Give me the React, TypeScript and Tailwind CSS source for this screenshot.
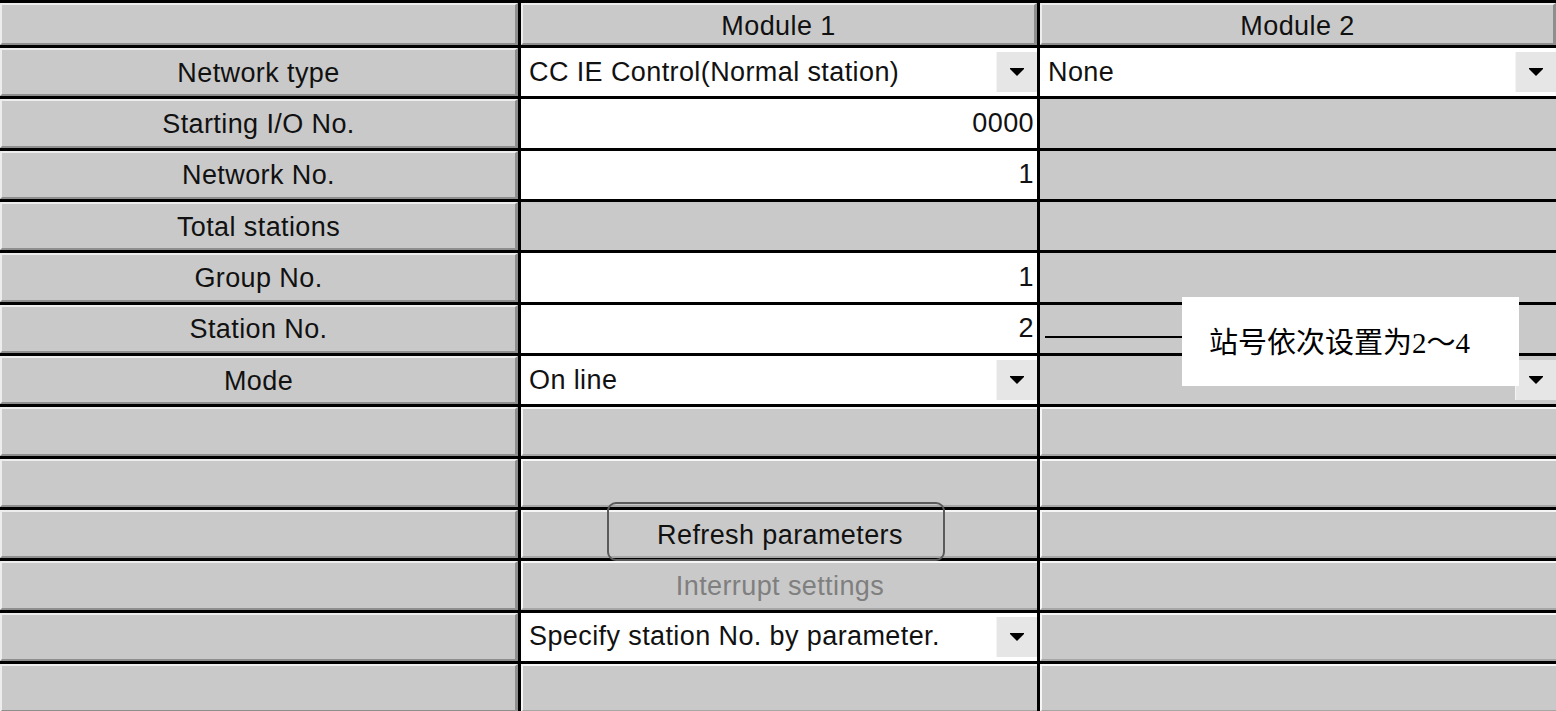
import type { ReactNode } from "react";

// Tabla de parámetros de red (estilo Windows clásico)

const bevel =
  "bg-[#c9c9c9] border-t-2 border-l-2 border-t-[#ededed] border-l-[#ededed] border-b-2 border-r-[3px] border-b-[#8e8e8e] border-r-[#8e8e8e]";

function Arrow() {
  return (
    <div className="w-[41px] my-[4px] bg-[#e6e6e6] border-l border-l-[#f4f4f4] flex items-center justify-center shrink-0">
      <svg width="14" height="8" viewBox="0 0 14 8">
        <polygon points="0,0 14,0 14,1 7,8 0,1" fill="#000" />
      </svg>
    </div>
  );
}

function Label({ text = "" }: { text?: string }) {
  return <div className={`${bevel} flex items-center justify-center pt-[2px]`}>{text}</div>;
}

function Head({ text = "" }: { text?: string }) {
  return <div className={`${bevel} flex items-center justify-center pt-[4px]`}>{text}</div>;
}

function Input({ value }: { value: string }) {
  return <div className="bg-white flex items-center justify-end pr-[3px]">{value}</div>;
}

function Select({ value }: { value: string }) {
  return (
    <div className="bg-white flex items-stretch">
      <div className="flex-1 flex items-center pl-[8px] whitespace-nowrap">{value}</div>
      <Arrow />
    </div>
  );
}

function Flat({ arrow = false }: { arrow?: boolean }) {
  return (
    <div className="bg-[#c9c9c9] flex items-stretch justify-end">
      {arrow && <Arrow />}
    </div>
  );
}

function Btn({ children, muted = false }: { children?: ReactNode; muted?: boolean }) {
  return (
    <div
      className={`bg-[#c9c9c9] border-t-2 border-l-2 border-t-[#f6f6f6] border-l-[#f6f6f6] border-b-2 border-b-[#a6a6a6] flex items-center justify-center pt-[2px] ${
        muted ? "text-[#7f7f7f]" : ""
      }`}
    >
      {children}
    </div>
  );
}

export default function App() {
  return (
    <div className="relative w-[1556px] h-[711px] overflow-hidden bg-black text-[27px] leading-none tracking-[0.4px] text-[#111] font-['Liberation_Sans',Arial,sans-serif]">
      <div className="grid grid-cols-[518px_516px_516px] grid-rows-[42px_repeat(13,48.33px)] gap-[3px] pt-[3px]">
        {/* Cabecera */}
        <Head />
        <Head text="Module 1" />
        <Head text="Module 2" />

        <Label text="Network type" />
        <Select value="CC IE Control(Normal station)" />
        <Select value="None" />

        <Label text="Starting I/O No." />
        <Input value="0000" />
        <Flat />

        <Label text="Network No." />
        <Input value="1" />
        <Flat />

        <Label text="Total stations" />
        <Flat />
        <Flat />

        <Label text="Group No." />
        <Input value="1" />
        <Flat />

        <Label text="Station No." />
        <Input value="2" />
        <Flat />

        <Label text="Mode" />
        <Select value="On line" />
        <Flat arrow />

        <Label />
        <Btn />
        <Btn />

        <Label />
        <Btn />
        <Btn />

        <Label />
        <Btn>Refresh parameters</Btn>
        <Btn />

        <Label />
        <Btn muted>Interrupt settings</Btn>
        <Btn />

        <Label />
        <Select value="Specify station No. by parameter." />
        <Btn />

        <Label />
        <Btn />
        <Btn />
      </div>

      {/* Marco redondeado sobre el botón */}
      <div className="absolute left-[607px] top-[502px] w-[338px] h-[59px] rounded-[9px] border-2 border-[#5a5a5a]" />

      {/* Nota: número de estación */}
      <div className="absolute left-[1045px] top-[297px] flex items-start">
        <div className="w-[137px] h-[2px] mt-[39px] bg-black" />
        <div className="w-[337px] h-[89px] bg-white flex items-center pl-[27px] pt-[4px] text-[29px] tracking-normal text-black font-['Liberation_Serif','Noto_Sans_CJK_SC',serif]">
          站号依次设置为2～4
        </div>
      </div>
    </div>
  );
}
